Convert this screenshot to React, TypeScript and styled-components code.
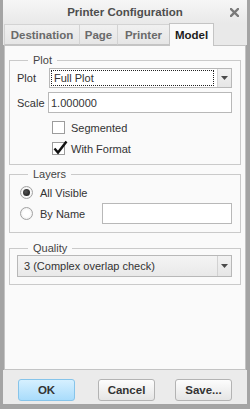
import React from "react";
import styled, { createGlobalStyle } from "styled-components";

const Global = createGlobalStyle`
  html, body { margin: 0; padding: 0; background: #a4a4a4; }
  body { font-family: "Liberation Sans", Arial, sans-serif; }
  * { box-sizing: border-box; }
`;

const Window = styled.div`
  width: 250px;
  height: 409px;
  display: flex;
  flex-direction: column;
  background: #a4a4a4;
  border-left: 3px solid #a4a4a4;
  border-right: 3px solid #a4a4a4;
  border-bottom: 5px solid #a4a4a4;
`;

const TitleBar = styled.div`
  height: 23px;
  flex: none;
  position: relative;
  display: flex;
  align-items: center;
  justify-content: center;
  background: linear-gradient(#f6f6f6, #e9e9e9);
  font-size: 11.5px;
  font-weight: bold;
  color: #4d4d4d;
`;

const Close = styled.svg`
  position: absolute;
  right: 8px;
  top: 8px;
`;

const TabStrip = styled.div`
  height: 22px;
  flex: none;
  display: flex;
  align-items: flex-end;
  padding-left: 1px;
  background: #e9e9e9;
`;

const Tab = styled.div<{ $active?: boolean; $w: number }>`
  width: ${(p) => p.$w}px;
  height: ${(p) => (p.$active ? 23 : 21)}px;
  margin-bottom: ${(p) => (p.$active ? -1 : 0)}px;
  display: flex;
  align-items: center;
  justify-content: center;
  font-size: 11.5px;
  font-weight: bold;
  color: ${(p) => (p.$active ? "#1c1c1c" : "#6a6a6a")};
  background: ${(p) => (p.$active ? "#fafafa" : "linear-gradient(#f0f0f0, #e6e6e6)")};
  border: 1px solid ${(p) => (p.$active ? "#c4c4c4" : "#d3d3d3")};
  border-bottom: ${(p) => (p.$active ? "none" : "1px solid #c4c4c4")};
  border-right-width: ${(p) => (p.$active ? 1 : 0)}px;
  position: relative;
  z-index: ${(p) => (p.$active ? 1 : 0)};
`;

const Panel = styled.div`
  flex: 1;
  margin: 0 1px;
  background: #fafafa;
  border: 1px solid #c4c4c4;
  padding: 0 4px;
  display: flex;
  flex-direction: column;
`;

const Group = styled.fieldset<{ $mt: number; $pt?: number; $pb: number }>`
  margin: ${(p) => p.$mt}px 0 0 0;
  padding: ${(p) => p.$pt ?? 0}px 8px ${(p) => p.$pb}px 7px;
  border: 1px solid #cacaca;
  min-width: 0;
`;

const Legend = styled.legend`
  margin-left: 11px;
  padding: 0 5px;
  font-size: 11px;
  line-height: 13px;
  color: #444;
`;

const FieldRow = styled.div<{ $h: number; $mt?: number }>`
  display: flex;
  align-items: center;
  height: ${(p) => p.$h}px;
  margin-top: ${(p) => p.$mt ?? 0}px;
`;

const Label = styled.span<{ $w?: number }>`
  width: ${(p) => (p.$w ? `${p.$w}px` : "auto")};
  flex: none;
  font-size: 11px;
  color: #333;
`;

const SelectBox = styled.div<{ $flat?: boolean; $ml?: number }>`
  flex: 1;
  height: 100%;
  margin-left: ${(p) => p.$ml ?? 0}px;
  display: flex;
  border: 1px solid #b8b8b8;
  background: ${(p) => (p.$flat ? "linear-gradient(#f4f4f4, #e9e9e9)" : "#ffffff")};
`;

const SelectText = styled.div<{ $focus?: boolean }>`
  flex: 1;
  margin: 1px 3px 1px 1px;
  padding-left: ${(p) => (p.$focus ? 2 : 4)}px;
  display: flex;
  align-items: center;
  font-size: 11px;
  color: #333;
  border: 1px ${(p) => (p.$focus ? "dotted #222" : "solid transparent")};
`;

const Arrow = styled.div`
  width: 14px;
  flex: none;
  display: flex;
  align-items: center;
  justify-content: center;
  border-left: 1px solid #d2d2d2;
  background: linear-gradient(#f2f2f2, #e6e6e6);
`;

const TextInput = styled.div<{ $ml?: number }>`
  flex: 1;
  height: 100%;
  margin-left: ${(p) => p.$ml ?? 0}px;
  display: flex;
  align-items: center;
  padding-left: 2px;
  border: 1px solid #b8b8b8;
  background: #fff;
  font-size: 11px;
  color: #333;
`;

const Checks = styled.div`
  margin-top: 4px;
`;

const CheckRow = styled.div`
  height: 21px;
  display: flex;
  align-items: center;
  padding-left: 35px;
  font-size: 11px;
  color: #333;
`;

const CheckBox = styled.div`
  width: 13px;
  height: 13px;
  flex: none;
  border: 1px solid #9c9c9c;
  background: #fff;
  margin-right: 6px;
  position: relative;
`;

const Tick = styled.svg`
  position: absolute;
  left: 0px;
  top: -3px;
`;

const RadioRow = styled.div<{ $h: number }>`
  height: ${(p) => p.$h}px;
  display: flex;
  align-items: center;
  padding-left: 3px;
  font-size: 11px;
  color: #333;
`;

const Radio = styled.div<{ $on?: boolean }>`
  width: 13px;
  height: 13px;
  flex: none;
  border-radius: 50%;
  border: 1px solid #a2a2a2;
  background: radial-gradient(circle, #ffffff 40%, #e4e4e4 100%);
  margin-right: 7px;
  display: flex;
  align-items: center;
  justify-content: center;
  &::after {
    content: "";
    display: ${(p) => (p.$on ? "block" : "none")};
    width: 7px;
    height: 7px;
    border-radius: 50%;
    background: radial-gradient(circle at 40% 40%, #555, #111);
  }
`;

const Footer = styled.div`
  height: 34px;
  flex: none;
  display: flex;
  align-items: flex-start;
  padding: 9px 0 0 15px;
  background: #ebebeb;
`;

const Button = styled.div<{ $primary?: boolean; $ml?: number }>`
  width: 57px;
  height: 22px;
  margin-left: ${(p) => p.$ml ?? 0}px;
  display: flex;
  align-items: center;
  justify-content: center;
  border-radius: 3px;
  font-size: 11.5px;
  font-weight: bold;
  color: #333;
  border: 1px solid ${(p) => (p.$primary ? "#86c4ea" : "#b3b3b3")};
  background: ${(p) =>
    p.$primary ? "linear-gradient(#d6f0ff, #a9dcfb)" : "linear-gradient(#fdfdfd, #e5e5e5)"};
`;

const DownArrow = () => (
  <svg width="7" height="4" viewBox="0 0 7 4">
    <path d="M0 0 H7 L3.5 4 Z" fill="#4a4a4a" />
  </svg>
);

export default function App() {
  return (
    <>
      <Global />
      <Window>
        <TitleBar>
          Printer Configuration
          <Close width="9" height="9" viewBox="0 0 9 9">
            <path d="M1 1 L8 8 M8 1 L1 8" stroke="#7a7a7a" strokeWidth="2.4" strokeLinecap="square" />
          </Close>
        </TitleBar>
        <TabStrip>
          <Tab $w={75}>Destination</Tab>
          <Tab $w={38}>Page</Tab>
          <Tab $w={52}>Printer</Tab>
          <Tab $w={45} $active>
            Model
          </Tab>
        </TabStrip>
        <Panel>
          <Group $mt={8} $pt={1} $pb={5}>
            <Legend>Plot</Legend>
            <FieldRow $h={20}>
              <Label $w={31}>Plot</Label>
              <SelectBox $ml={1}>
                <SelectText $focus>Full Plot</SelectText>
                <Arrow>
                  <DownArrow />
                </Arrow>
              </SelectBox>
            </FieldRow>
            <FieldRow $h={21} $mt={4}>
              <Label $w={31}>Scale</Label>
              <TextInput>1.000000</TextInput>
            </FieldRow>
            <Checks>
              <CheckRow>
                <CheckBox />
                Segmented
              </CheckRow>
              <CheckRow>
                <CheckBox>
                  <Tick width="15" height="15" viewBox="0 0 15 15">
                    <path d="M1.5 8.5 L5 12.5 L13.5 1.5" fill="none" stroke="#111" strokeWidth="2.4" />
                  </Tick>
                </CheckBox>
                With Format
              </CheckRow>
            </Checks>
          </Group>
          <Group $mt={3} $pt={1} $pb={8}>
            <Legend>Layers</Legend>
            <RadioRow $h={21}>
              <Radio $on />
              All Visible
            </RadioRow>
            <RadioRow $h={21}>
              <Radio />
              By Name
              <TextInput $ml={17} />
            </RadioRow>
          </Group>
          <Group $mt={9} $pb={7}>
            <Legend>Quality</Legend>
            <FieldRow $h={22}>
              <SelectBox $flat>
                <SelectText>3 (Complex overlap check)</SelectText>
                <Arrow>
                  <DownArrow />
                </Arrow>
              </SelectBox>
            </FieldRow>
          </Group>
        </Panel>
        <Footer>
          <Button $primary>OK</Button>
          <Button $ml={23}>Cancel</Button>
          <Button $ml={20}>Save...</Button>
        </Footer>
      </Window>
    </>
  );
}
